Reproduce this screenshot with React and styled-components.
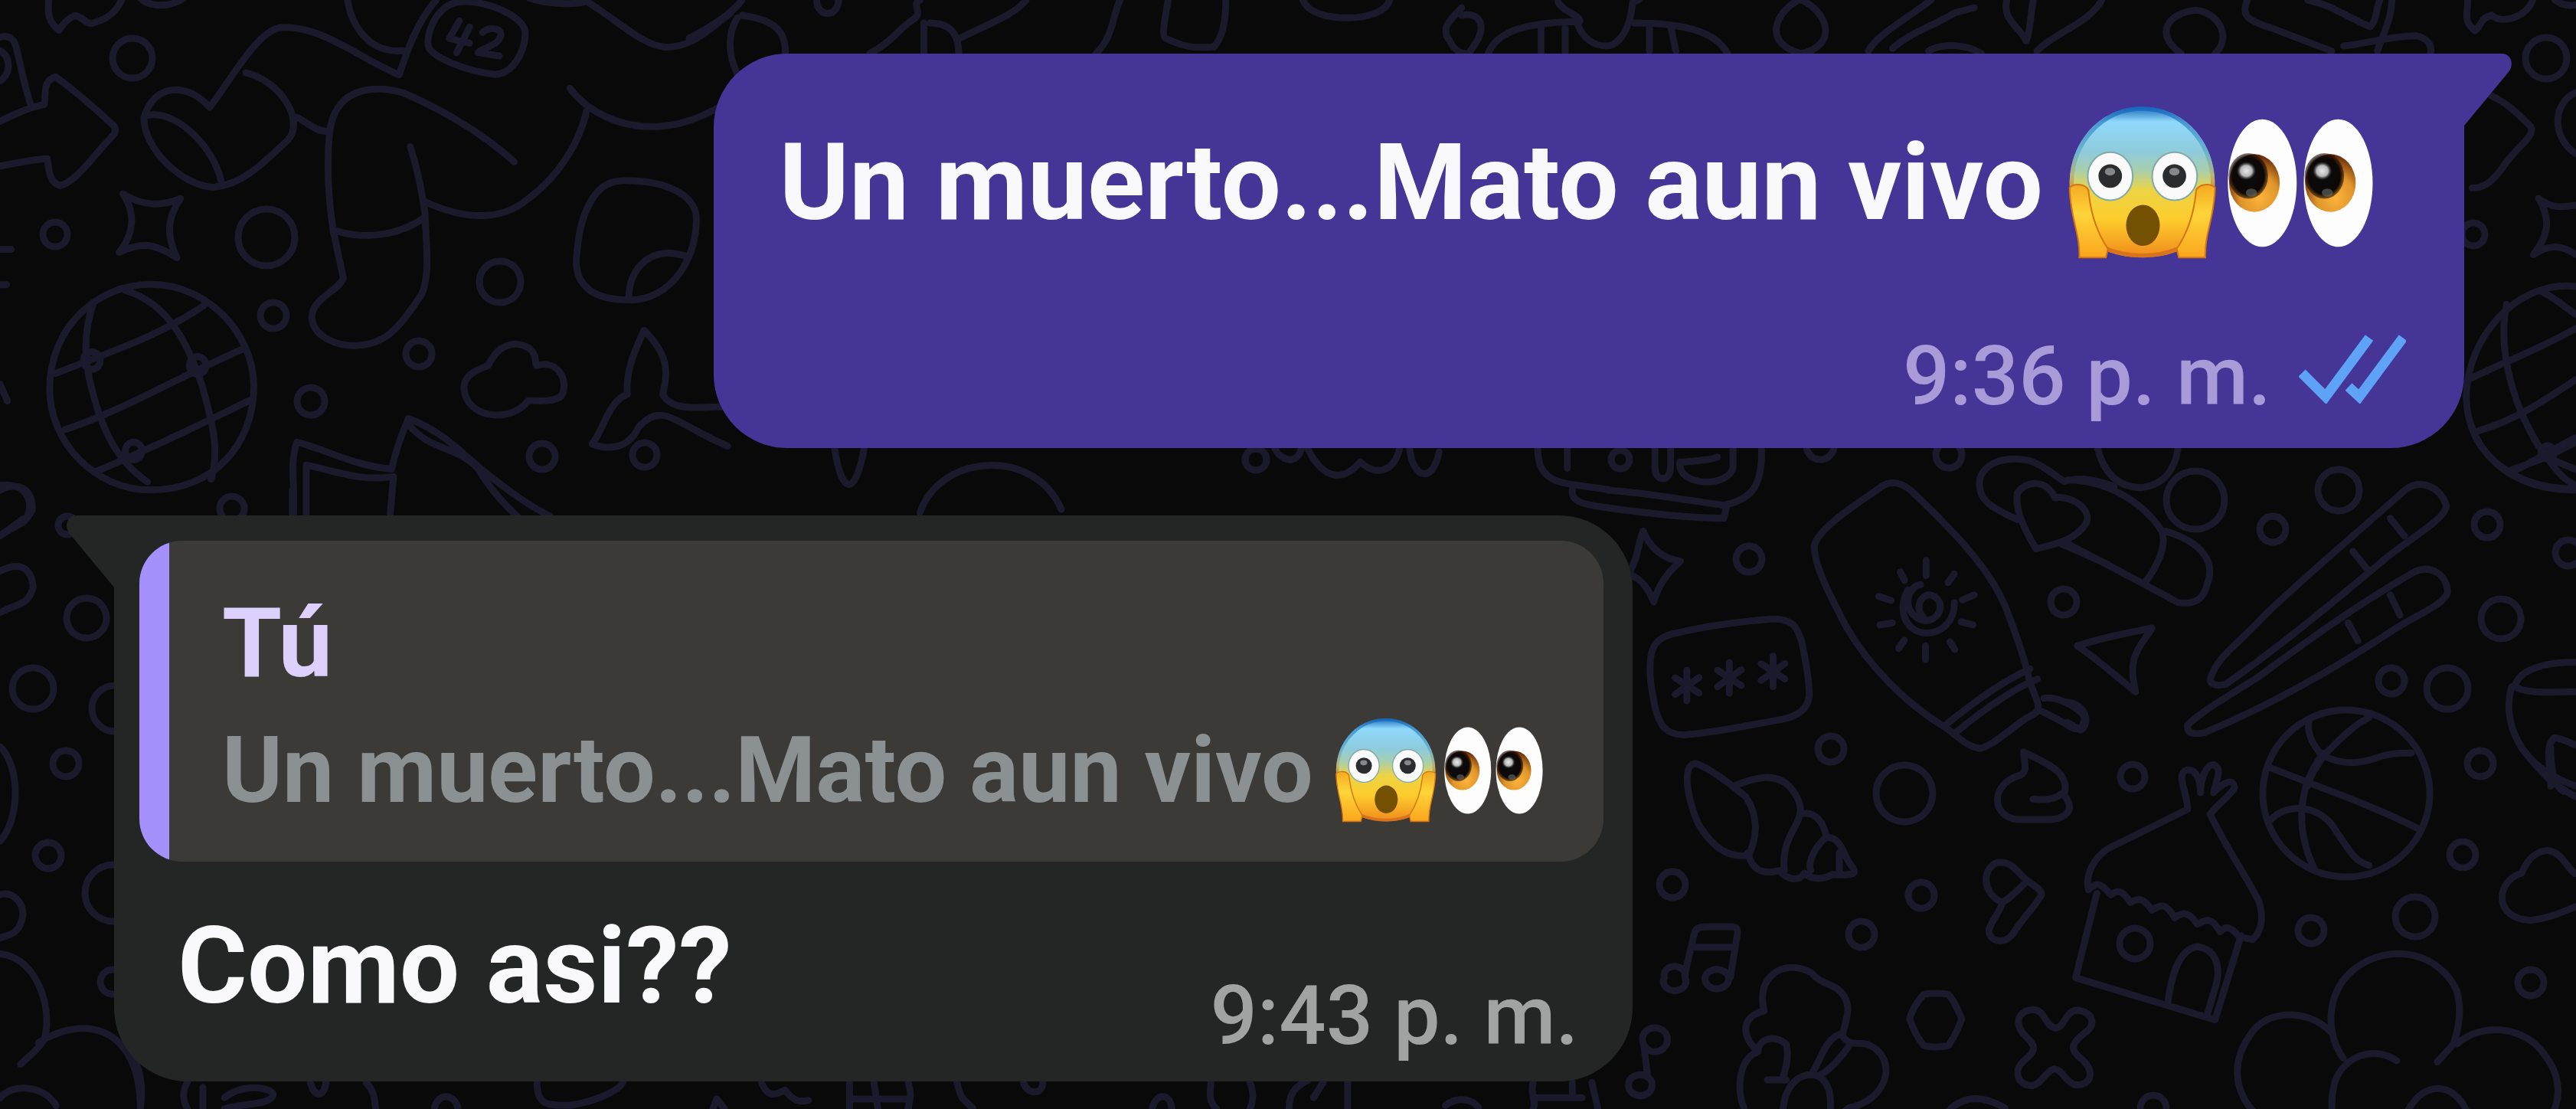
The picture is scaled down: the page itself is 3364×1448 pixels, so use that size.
import React from "react";
import styled, { createGlobalStyle } from "styled-components";

const GlobalStyle = createGlobalStyle`
  *, *::before, *::after { box-sizing: border-box; }
  body {
    margin: 0;
    background: #080908;
    font-family: Roboto, "Liberation Sans", sans-serif;
  }
`;

const Page = styled.div`
  position: relative;
  min-height: 100vh;
  overflow: hidden;
`;

const Pattern = styled.svg`
  position: absolute;
  inset: 0;
  width: 100%;
  height: 100%;

  g * { vector-effect: non-scaling-stroke; }
`;

const Chat = styled.main`
  position: relative;
  display: flex;
  flex-direction: column;
  gap: 88px;
  padding: 70px 146px 36px 149px;
`;

const Bubble = styled.article`
  position: relative;
  align-self: ${(p) => (p.$mine ? "flex-end" : "flex-start")};
  width: ${(p) => (p.$mine ? "74.5%" : "64.6%")};
  min-height: ${(p) => (p.$mine ? "515px" : "739px")};
  display: flex;
  flex-direction: column;
  justify-content: space-between;
  padding: ${(p) => (p.$mine ? "68px 76px 30px 86px" : "33px 38px 22px 33px")};
  border-radius: ${(p) => (p.$mine ? "96px 0 96px 96px" : "0 96px 96px 96px")};
  background: ${(p) => (p.$mine ? "#443596" : "#242625")};
`;

const Tail = styled.svg`
  position: absolute;
  top: 0;
  ${(p) => (p.$mine ? "left: calc(100% - 1px)" : "right: calc(100% - 1px)")};
  width: 64px;
  height: 100px;
  fill: ${(p) => (p.$mine ? "#443596" : "#242625")};
  transform: ${(p) => (p.$mine ? "none" : "scaleX(-1)")};
`;

const Text = styled.p`
  display: flex;
  align-items: center;
  gap: 32px;
  margin: 0;
  font-size: 139px;
  line-height: 168px;
  font-weight: 700;
  color: #f9f9fb;
  white-space: nowrap;
`;

const Quote = styled.blockquote`
  margin: 0;
  height: 419px;
  padding: 48px 40px 0 108px;
  border-radius: 56px;
  background: linear-gradient(to right, #a690fc 39px, #3b3a37 39px);
`;

const Author = styled.cite`
  display: block;
  font-style: normal;
  font-weight: 700;
  font-size: 126px;
  line-height: 172px;
  color: #ddd0fc;
`;

const QuotedText = styled(Text)`
  gap: 28px;
  font-size: 120px;
  line-height: 160px;
  color: #8b9193;
`;

const Footer = styled.footer`
  display: flex;
  align-items: flex-end;
  justify-content: flex-end;
  gap: 36px;
`;

const ReplyRow = styled.div`
  display: flex;
  align-items: flex-start;
  justify-content: space-between;
  padding: 0 32px 0 50px;
`;

const Time = styled.time`
  font-size: 108px;
  font-weight: 500;
  line-height: 128px;
  margin-top: ${(p) => (p.$low ? "84px" : "0")};
  color: ${(p) => (p.$low ? "#a0a3a1" : "#a99bd8")};
  white-space: nowrap;
`;

const Ticks = styled.svg`
  width: 140px;
  height: 92px;
  margin-bottom: 28px;
  fill: none;
  stroke: #5ea3f5;
  stroke-width: 13;
`;

const Emojis = styled.span`
  display: flex;
  align-items: center;
  gap: ${(p) => (p.$small ? "10px" : "14px")};

  svg { display: block; }
  svg:first-child { height: ${(p) => (p.$small ? "138px" : "202px")}; }
  svg:last-child { height: ${(p) => (p.$small ? "114px" : "168px")}; }
`;

function Eye({ x, id }) {
  return (
    <g transform={`translate(${x} 0)`}>
      <ellipse cx="137" cy="254" rx="136" ry="252" fill="#fdfdfd" />
      <ellipse cx="106" cy="254" rx="100" ry="114" fill={`url(#${id}-iris)`} />
      <ellipse cx="82" cy="226" rx="78" ry="90" fill={`url(#${id}-pupil)`} />
      <ellipse cx="74" cy="206" rx="38" ry="36" fill={`url(#${id}-shine)`} />
      <ellipse cx="94" cy="292" rx="22" ry="16" fill="#7b8480" opacity="0.5" />
    </g>
  );
}

function EmojiPair({ id, small }) {
  return (
    <Emojis $small={small}>
      <svg viewBox="0 0 585 605" role="img" aria-label="😱">
        <defs>
          <linearGradient id={`${id}-face`} x1="0" y1="0" x2="0" y2="1">
            <stop offset="0" stopColor="#1667b8" />
            <stop offset="0.1" stopColor="#8fd8fb" />
            <stop offset="0.3" stopColor="#8ecbdc" />
            <stop offset="0.42" stopColor="#a6cfae" />
            <stop offset="0.55" stopColor="#ecd446" />
            <stop offset="0.75" stopColor="#fdcc2c" />
            <stop offset="1" stopColor="#f08a1c" />
          </linearGradient>
          <linearGradient id={`${id}-edge`} x1="0" y1="0" x2="0" y2="1">
            <stop offset="0" stopColor="#1467bf" />
            <stop offset="0.3" stopColor="#4098bd" stopOpacity="0.6" />
            <stop offset="0.45" stopColor="#b98a4a" stopOpacity="0.5" />
            <stop offset="0.6" stopColor="#c35a08" />
            <stop offset="1" stopColor="#d06a1c" />
          </linearGradient>
          <linearGradient id={`${id}-hand`} x1="0" y1="0" x2="0" y2="1">
            <stop offset="0" stopColor="#f5a923" />
            <stop offset="0.4" stopColor="#fed53a" />
            <stop offset="1" stopColor="#fba51d" />
          </linearGradient>
        </defs>
        <path d="M292 4C130 4 10 140 8 300c0 100 50 200 130 262 90 42 218 42 308 0 80-62 130-162 130-262C574 140 454 4 292 4Z" fill={`url(#${id}-face)`} />
        <path d="M292 12C136 12 18 144 16 300c2 100 52 196 128 256 90 40 206 40 296 0 76-60 126-156 128-256C566 144 448 12 292 12Z" fill="none" stroke={`url(#${id}-edge)`} strokeWidth="16" opacity="0.75" />
        <path d="M8 320c20-18 62-14 74 10 8 100 36 170 76 230l-8 34H46C50 500 10 440 8 320Z" fill={`url(#${id}-hand)`} stroke="#d57412" strokeWidth="6" />
        <path d="M577 320c-20-18-62-14-74 10-8 100-36 170-76 230l8 34h104c-4-94 36-154 38-274Z" fill={`url(#${id}-hand)`} stroke="#d57412" strokeWidth="6" />
        <g fill="#fafafa" stroke="#7fa9ab" strokeWidth="6">
          <ellipse cx="167" cy="276" rx="88" ry="94" />
          <ellipse cx="419" cy="276" rx="88" ry="94" />
        </g>
        <g fill="#2b2c2e">
          <circle cx="167" cy="275" r="46" />
          <circle cx="418" cy="275" r="46" />
        </g>
        <g fill="#85878a">
          <ellipse cx="166" cy="258" rx="20" ry="15" />
          <ellipse cx="418" cy="258" rx="20" ry="15" />
        </g>
        <ellipse cx="295" cy="468" rx="66" ry="80" fill="#735002" />
      </svg>
      <svg viewBox="0 0 575 508" role="img" aria-label="👀">
        <defs>
          <radialGradient id={`${id}-iris`} cx="0.6" cy="0.75" r="0.75">
            <stop offset="0" stopColor="#fdb33a" />
            <stop offset="0.5" stopColor="#df952b" />
            <stop offset="1" stopColor="#5d2005" />
          </radialGradient>
          <radialGradient id={`${id}-pupil`}>
            <stop offset="0" stopColor="#0b0b0c" />
            <stop offset="0.8" stopColor="#0d0808" />
            <stop offset="1" stopColor="#1a0c04" stopOpacity="0.5" />
          </radialGradient>
          <radialGradient id={`${id}-shine`}>
            <stop offset="0" stopColor="#e8e8e8" />
            <stop offset="0.6" stopColor="#b7b7b7" />
            <stop offset="1" stopColor="#555" stopOpacity="0" />
          </radialGradient>
        </defs>
        <Eye x={0} id={id} />
        <Eye x={300} id={id} />
      </svg>
    </Emojis>
  );
}

/* Loose circles scattered between the doodles: [cx, cy, r] */
const CIRCLES = [
  [173, 76, 26], [72, 306, 16], [348, 310, 37], [653, 368, 27], [357, 412, 17],
  [547, 462, 17], [406, 524, 18], [708, 596, 17], [303, 664, 16], [2284, 730, 17],
  [2695, 786, 17], [2391, 978, 17], [2377, 582, 18], [2545, 594, 17], [2116, 600, 12],
  [2968, 691, 17], [3054, 640, 27], [3248, 685, 17], [3354, 722, 17], [3266, 808, 26],
  [3123, 889, 17], [3196, 899, 27], [3239, 997, 17], [2867, 653, 38], [2785, 1014, 16],
  [2184, 1155, 17], [2431, 1220, 17], [2509, 1169, 17], [2487, 1036, 37], [3216, 1116, 17],
  [3018, 1215, 17], [3154, 1197, 26], [3305, 1283, 17], [2788, 1232, 20], [2812, 1447, 17],
  [113, 807, 26], [43, 899, 27], [86, 997, 17], [63, 1117, 17], [147, 1282, 16],
  [88, 686, 12], [150, 925, 30], [148, 1166, 37], [3325, 76, 27], [3230, 306, 15],
  [842, 594, 16], [1640, 600, 14], [3064, 1036, 109],
];

/* Each sheet of doodles is drawn in its own grid and scaled onto the wallpaper. */
const SHEETS = [
  {
    at: "scale(.606 .44)",
    d: [
      "M105-10c0 40-8 66 22 100 10-20 18-34 34-44 20 4 28 34 44 20 30-10 50-40 60-76M300-10c20 34 70 34 100 0",
      "M0 110c30-10 34 20 40 60 10 60 16 100 26 140M0 150c24 20 24 70 0 90M0 360c30-20 60-40 95-50 6-30-6-70 25-82 40 40 90 100 125 145 12 20-10 40-20 56-34 54-64 110-95 122-26-10-24-50-28-80-34 2-70 14-102 22",
      "M452 318C400 240 330 250 310 350c0 90 80 200 150 206 70-10 120-90 160-140 40-60-20-180-90-200",
      "M318 342c70-16 150 110 160 206",
      "M452 318c50-90 100-220 150-236 90-10 170 90 258 140 20-80 40-160 80-222M748-10c8 90 50 170 120 160M632 370c-4-60 34 20 72 20",
      "M1108 480c-80-100-180-170-240-205-80-30-148 0-158 120-6 90-4 180 8 290l22 140c-10 40-70 60-68 120 6 60 60 84 100 80 70-4 100-80 136-150 20-60 10-150 8-240-8-80-20-150-32-200",
      "M718 682c60 30 140 20 196-36M918 600c80 50 160 60 220-10 60-60 110-160 126-260M1228 262c60 110 200 170 340 40M1140-6c40 20 100 20 124 10 70 60 120 130 170 136 60 0 90-50 140-100",
      "M990 6c50-10 140 40 142 90 0 60-30 130-70 124-50-8-140-50-140-90 0-50 26-120 68-124Z",
      "M990 62l-22 52 44 14M1012 80l-28 76M1040 96c20-24 52-8 34 24-14 20-34 22-44 36l46 10",
      "M265 575c40 36 84 38 124 14-30 60-30 110-8 176-50-46-80-46-124-16 34-60 34-120 8-174Z",
      "M325 844c120 0 220 140 222 300 0 180-90 310-222 310-120 0-218-140-218-300 0-180 100-310 218-310Z",
      "M200 905c-20 80-20 160-2 250 20 110 50 210 120 275M270 862c100 40 140 180 165 280 20 100 40 190 20 280M120 1108c130-70 220-110 318-200M140 1275c130-60 250-160 385-240M205 1400c140-80 240-150 338-215",
      "M180 1070a18 26 0 1 0 36 0a18 26 0 1 0-36 0M408 1084a18 26 0 1 0 36 0a18 26 0 1 0-36 0M270 1338a18 26 0 1 0 36 0a18 26 0 1 0-36 0",
      "M1350 536c70 0 140 30 150 100 6 120-50 260-150 254-70-2-110-40-108-120 4-70 10-120 30-170 20-50 44-64 78-64ZM1355 884c0-90 50-160 126-122",
      "M1052 1085c20-60 54-80 90-50 16 20 10 40 14 50 50-20 70 50 54 90-20 20-50 14-72 14-30 60-120 60-136-20-10-50 20-70 50-84Z",
      "M1388 980c50 70 54 120 40 190 20 50 70 40 140 36M1388 980c-20 60-40 120-36 190-40 20-50 100-76 148 40 20 80 10 100-50 50-80 80-10 192 56",
      "M632 1540c6-100-10-160 8-228 60 20 120 70 204 80 10-60 20-100 36-150 60 30 100 80 140 130 50 60 120 130 166 160M660 1540v-160c70 20 120 50 188 34l-8 126M880 1260c50 80 100 60 150 130 30 70 60 110 90 150M0 1440c60-10 80 60 50 110M0 1590l50-50",
      "M0 740h24M0 845h14M0 1140l16 50",
    ],
  },
  {
    at: "translate(2100 560) scale(.408 .3333)",
    d: [
      "M880 222c30-20 60-10 90 20 110 130 240 280 300 450 40 120 70 240 80 300 30 100 46 110-10 140-60 50-110 110-150 120-50-10-80-60-120-90C960 1080 840 940 760 770c-50-120-100-230-100-310 10-70 130-160 220-238Z",
      "M1080 1160c90-90 180-170 270-220M1112 1190c90-90 180-170 262-210M1395 1055c50-10 130 50 130 80-6 60-40 40-60 20-30-20-60-40-80-50",
      "M1010 740c-30-40-10-90 20-90 60 20 30 110-20 100-70-20-60-130-10-140M960 630c-40 90 0 170 60 170 50 0 90-50 88-120",
      "M1018 515v60M935 560l14 34M1108 568l-20 34M866 656l40 16M1172 650l-38 20M870 768l40-8M1168 768l-38-12M930 860l18-32M1110 864l-16-30M1016 850v54",
      "M200 805c100-30 220-50 320-60 70-4 86 30 100 90 12 70 24 150 24 210-6 70-60 90-120 100-90 20-180 44-280 54-60 0-80-40-94-110-10-60-20-120-14-190 4-50 24-80 64-94Z",
      "M252 945v120M215 975l76 60M215 1040l76-66M388 915v120M350 945l76 60M350 1010l76-66M528 890v120M490 920l76 60M490 985l76-66",
      "M112 400c20 60 60 110 120 118-40 40-70 90-86 160-20-60-40-90-80-110 30-60 30-120 46-168Z",
      "M0 240c120 10 250 40 380 60l-10 50C250 350 120 330 0 310M365 300c90-20 130-70 126-220M150 60v90c0 60 50 60 50 0V60M240 130c90-10 90-10 110-20M230 130c-10 100 160 100 170 20V70",
      "M1310 355c-90-50-130-80-120-160 20-70 90-90 160-70 50 20 80 60 110 80 60-20 110 0 160 20M1370 470c-40-80-70-160-60-220 40-60 100-40 120 20 60-10 120 50 100 100-30 60-90 80-160 100ZM1450 450c60 30 90 50 150 80",
    ],
  },
  {
    at: "translate(2700 560) scale(.4235 .3333)",
    d: [
      "M0 200c150 0 260 130 290 200 20 60-20 150-50 200M0 450c120 80 240 160 340 230 50 10 80-10 90-70 30-90-20-170-130-210M90 60c20 120 70 170 140 170 60-10 100-60 110-150",
      "M30 850c70-30 150-50 230-70-30 70-80 100-50 250-60-60-120-130-180-180Z",
      "M440 980c20-90 90-140 160-240 120-150 300-340 440-500 50-50 110-10 128 60 0 50-100 120-180 200-160 170-330 350-500 500-30 10-48 0-48-20Z",
      "M370 1160c60-70 150-130 220-190 140-130 300-280 480-410 50-30 100 10 102 80-10 50-100 90-170 150-180 150-370 290-580 400-40 10-54 0-52-30ZM880 480l44 70M995 350l44 70M865 760l30 70M995 650l30 80",
      "M745 1140c-10 60 20 110 40 140M930 1130c-60 40-100 100-140 150-20 40-40 70-50 120M790 1280c60 40 110 30 160 10 40-20 70-20 110-20",
      "M1245-10c30 120 140 250 330 245M1420-10c40 120 70 130 150 170M1370 160c70-30 110-50 200-110M1460 92a20 26 0 1 0 40 0a20 26 0 1 0-40 0",
      "M1380 1010c10-70 100-100 200-96M1380 1010c40 30 110 20 200 20M1370 1010c-30 120 10 310 200 390M1490 1400c0-90-20-150 10-190 20 0 50 20 70 30",
      "M0 1070c60 10 70 90 40 110l-40-30",
    ],
  },
  {
    at: "translate(2100 980) scale(.408 .3333)",
    d: [
      "M280 50c50 20 120 90 160 130 50 90 30 180 10 230-60 10-110-20-160-120-30-80-60-230-10-240ZM400 140c60-30 130-60 180 0 30 40 40 80 34 110 50-20 80 40 84 90 50 0 50 60 80 110 30 40-10 40-60 35-40 30-80 10-90-5-20 40-60 20-80-10-60 20-90-10-100-70M614 250c-10 60-60 100-50 220M698 340c-30 30-60 90-50 130M740 400v80",
      "M1330 5c80 50 150 80 130 170 40 60 0 90-40 95h-110c-80-10-90-130 0-170 40-10 20-60 20-95ZM1360 190c40 6 70 0 90-20",
      "M1262 595c-60-30-70-125-20-155 50-14 70 40 100 70 30 26 46 36 45 56-30 60-60 90-90 150-30 50-80 30-78-14 10-40 36-70 43-107ZM1262 595c30-20 50-50 80-85",
      "M245 880l30-160c6-34 30-30 60-30h60c26 0 20 20 16 50l-20 150M280 770h120M180 890a36 36 0 1 0 66 0a34 36 0 1 0-66 0M310 895a38 38 0 1 0 76 0a38 38 0 1 0-76 0",
      "M480 1180c-60-70-50-140 20-160-30-130 60-210 150-150 30 40 50 40 80 60 70 60 20 150 20 190 30 40 40 20 80 30 100 50 70 220-60 250l-20 20M480 1180c0-50 50-70 90-30 10 50 0 90-10 130M480 1180c-60 20-80 160-30 260M745 1110c-50 20-60 90-90 150M680 1270c30-20 60-60 90-110M560 1420c0-90 40-150 90-150 40 0 70 50 60 150M510 1290h60",
      "M110 1130a40 50 0 1 0 80 0a40 44 0 1 0-80 0M115 1160l12 120M65 1310a36 40 0 1 0 76 0a38 40 0 1 0-76 0",
      "M1010 955c20-5 60-5 80 0 20 30 30 60 42 95-10 40-24 70-42 105-20 8-60 8-80 0-20-30-34-65-45-105 8-35 24-65 45-95Z",
      "M1360 1015c40 0 40 70 72 72 30 0 30-70 72-70 50 10 60 60 20 90-40 40-50 60-10 100 50 50 30 110-20 102-30-10-40-60-66-62-30 10-40 60-70 66-50 0-60-60-30-95 50-50 40-60 0-110-30-50-10-90 32-93ZM1090 1410c50-60 110-60 180-10",
    ],
  },
  {
    at: "translate(2700 980) scale(.4235 .3333)",
    d: [
      "M370 230c0-70-40-140 0-155 30 0 40 50 40 90 0-60 20-110 40-110 30 20 10 50 0 110 30-40 60-60 65-20-10 30-50 60-75 105 40 110 110 240 150 340 20 80 0 130-20 150l-40-10c-40-60-50-30-60-20-30-70-50-40-70-30-30-60-50-40-70-25-30-70-50-45-70-30-30-60-50-40-66-30-26-50-40-50-60-30-40-60-50-40-70-20-10-60 20-130 60-160Z",
      "M90 560L25 890l430 165 80-330M310 980c10-90 30-200 90-212 60 10 70 80 60 140l-30 130",
      "M620 65c160 80 320 150 460 240M790 10c-90 140-80 320-30 450M620 280c60-90 170-60 210 40 40 70 50 110 100 130",
      "M1400 480c20-60 50-90 85-88 40 10 50 60 80 90M1400 480c-80 30-90 180 30 185 60-10 90-30 150-60M1400-10c50 80 90 150 200 210M1490-10c0 80 10 150 40 170",
      "M850 1205C800 1120 790 960 880 860c120-120 270-60 320 80 20 90 0 170-10 210l-50 70M810 1100c-70-90-200-90-250 20-50 90-50 200 10 290M1015 1215c-70-60-160-20-190 80-10 50-10 70-10 110M1200 1150c80-90 210-70 270 40 50 80 50 160 30 220M1050 1410c50-120 140-110 180 0",
    ],
  },
  {
    at: "translate(0 640) scale(.3333 .5153)",
    d: [
      "M0 0c60-20 130-10 126 50-30 40-70 40-126 65M0 205c60-20 120-20 130 40-20 50-60 40-130 65M0 650c80 50 80 180 0 240M0 1025c50-10 90 20 90 50-10 50-50 50-90 60",
      "M0 1175c160 10 210 160 170 220-30 30-60 40-90 60M150 1400c200-80 400-30 400 168M0 1540c50-40 180-30 220 20M1145 0v64",
    ],
  },
  {
    at: "translate(900 0) scale(1.5714 .3333)",
    d: [
      "M0 150C20 100 36 50 44 0M44 60c30 20 36 70 36 150M40 70c-8 60-8 140 0 220M106 0c0 70 18 70 18 0M150 210c20-50 24-100 38-140 6-30-4-50 4-70M195 90v120M280 0c-10 60-30 90-55 150M200 90c20 0 24 60 24 120M338 210c14-60 14-150 20-210M398 0c-2 60-6 140-2 150 14 30 20 40 40 34 8-40 10-120 10-184M510 0c4 50 20 70 38 70s32-30 34-70",
      "M642 30c-10 50-18 80-10 130 4 40 10 50 14 50M642 60c12-10 20 20 14 90l-8 60M722 0c0 40 20 60 18 85-50 0-70 50-76 125M708 110v100M728 110v100M738 90c4 60 14 90 24 90s20-60 22-170c4-10 6-10 6-20M785 90c50 0 70 50 78 120M798 110v90M816 110l4 90",
      "M922 0c-20 50-30 170 2 210 30-30 24-160 0-210ZM980 200c6-60 30-120 52-200M1000 190c14-60 30-80 52-140l16-20M1030 200c10-30 30-30 44 10M1095 0c-4 80 10 100 16 160 4-40 4-120 6-160M1120 200c14-70 44-110 54-200M1240 210c-24-80-10-160 12-170 20 10 30 110 16 170M1295 0c-6 60 0 80 20 110l50 90M1345 0c20 20 30 60 52 105 6-30 4-60 8-105M1415 0c0 70-8 140-12 200M1375 180c20-10 40-40 60-40 10 10 14 40 12 70M1478 0c0 60-4 80 6 120 6-20 4-50 14-60 10 40 30 0 34-60",
    ],
  },
  {
    at: "translate(3000 0) scale(.3333 .4464)",
    d: [
      "M760 280c60 20 100 50 155 90 20 30-60 60-110 120-40 40-70 60-120 60M1092 270c-90 30-100 130 0 180M1010 0c30 16 60 18 82 14",
      "M945 580c50 30 90 26 147 20M945 580c50 60 40 110-20 165 60-30 110-30 167 0",
      "M1092 838c-220-20-430 140-430 330 10 160 190 270 430 265M820 890c-40 150 40 340 180 470 30 30 60 50 92 60M950 850c60 20 100 50 142 70M670 1110c140-50 280-90 422-150M710 1260c140-30 240-80 382-150M840 1380c90-30 170-70 252-100",
    ],
  },
  {
    at: "translate(140 1180) scale(1.2755 .3333)",
    d: [
      "M26 600c10 60 10 130 8 200M82 700c-6 40-4 70 0 104M98 720v84M120 760c20-60 50-40 50-10-4 40-30 30-50 54M208 700c4 60 14 60 16 0M265 700c10 40 8 70 10 104M335 800c4-60 20-60 24 0M440 700c0 90 10 90 34 90 30-20 50-60 54-90M620 804l4-40 8 40M670 700c6 60 14 50 24 30 8 40 14 50 24 40M760 700v104M785 700l4 104M820 700c4 40 2 70 0 104M760 765h60M870 700c4 60 4 60 16 100M938 700c4 50 20 50 20 0M1070 800c4-60 18-60 20 0M1130 690c0 40-4 80 6 114M1170 700c4 40 4 70 0 104M1210 800c0-70 10-90 20-110M1245 700l-10 60M1270 700v104M1370 790c14-40 30-20 34 10M1460 700c-4 40 4 70 0 104M1460 760h50M1500 700v60M1520 700l6 100",
    ],
  },
  {
    at: "scale(2.1454)",
    d: [
      "M508 273c4 26 12 32 18 0M560 312c12-36 70-40 86-2M776 273c4 8 14 10 16 0M796 273c10 20 22 20 32 8 8 8 20 8 24-8M858 273c2 18 14 22 18 2M936 273c0 14 6 20 22 22l21 3M958 295c-4 10 4 12 21 14M954 273v12",
    ],
  },
];

function Wallpaper() {
  return (
    <Pattern
      viewBox="0 0 3364 1448"
      preserveAspectRatio="xMidYMid slice"
      fill="none"
      stroke="#1b1a2d"
      strokeWidth="9"
      strokeLinecap="round"
      strokeLinejoin="round"
      aria-hidden="true"
    >
      {SHEETS.map((sheet) => (
        <g key={sheet.at} transform={sheet.at}>
          {sheet.d.map((d) => <path key={d} d={d} />)}
        </g>
      ))}
      <g>
        {CIRCLES.map(([cx, cy, r]) => <circle key={`${cx}-${cy}`} cx={cx} cy={cy} r={r} />)}
      </g>
    </Pattern>
  );
}

function BubbleTail({ mine }) {
  return (
    <Tail $mine={mine} viewBox="0 0 64 100" aria-hidden="true">
      <path d="M0 0h50c12 0 17 14 9 24L1 94v6H0Z" />
    </Tail>
  );
}

export default function App() {
  return (
    <Page>
      <GlobalStyle />
      <Wallpaper />
      <Chat>
        <Bubble $mine>
          <BubbleTail mine />
          <Text>
            <span>Un muerto...Mato aun vivo</span>
            <EmojiPair id="message" />
          </Text>
          <Footer>
            <Time>9:36 p. m.</Time>
            <Ticks viewBox="0 0 140 92" role="img" aria-label="Leído">
              <path d="M4 52l31 31L92 6M65 70l14 13L136 6" />
            </Ticks>
          </Footer>
        </Bubble>
        <Bubble>
          <BubbleTail />
          <Quote>
            <Author>Tú</Author>
            <QuotedText>
              <span>Un muerto...Mato aun vivo</span>
              <EmojiPair id="quote" small />
            </QuotedText>
          </Quote>
          <ReplyRow>
            <Text>Como asi??</Text>
            <Time $low>9:43 p. m.</Time>
          </ReplyRow>
        </Bubble>
      </Chat>
    </Page>
  );
}
